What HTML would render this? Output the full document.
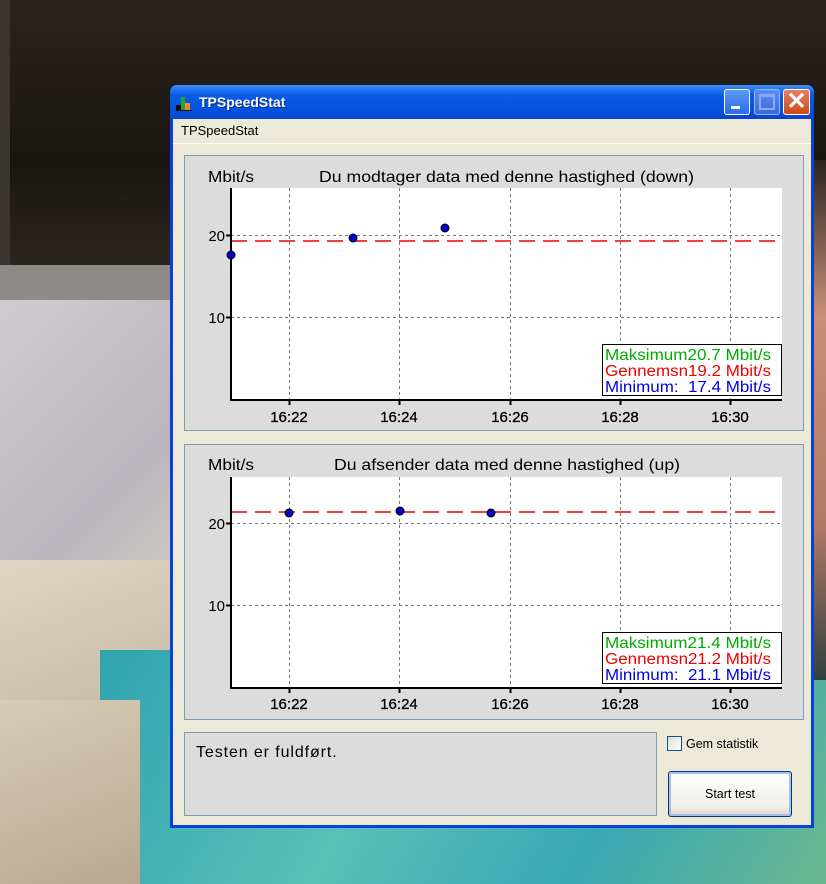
<!DOCTYPE html>
<html><head><style>
body{margin:0;width:826px;height:884px;overflow:hidden;position:relative;font-family:"Liberation Sans",sans-serif;background:#1c1814}
.a{position:absolute}
</style></head><body>
<div class="a" style="left:0;top:0;width:826px;height:270px;background:linear-gradient(#2a241e,#1a1612 60%,#2c2620)"></div>
<div class="a" style="left:0;top:0;width:10px;height:270px;background:#3a3530"></div>
<div class="a" style="left:0;top:265px;width:180px;height:60px;background:#8e8a88"></div>
<div class="a" style="left:0;top:300px;width:180px;height:330px;background:linear-gradient(135deg,#cfcdd0,#b8b6bc 60%,#d8d2c8)"></div>
<div class="a" style="left:0;top:560px;width:180px;height:324px;background:linear-gradient(160deg,#e0d6c2,#c8bca8 50%,#e6dcc8)"></div>
<div class="a" style="left:100px;top:650px;width:726px;height:234px;background:linear-gradient(120deg,#2fa4b0,#5ac0b8 40%,#3aa8b4 70%,#6ab890)"></div>
<div class="a" style="left:0;top:700px;width:140px;height:184px;background:linear-gradient(160deg,#d8ccb4,#b8a890)"></div>
<div class="a" style="left:812px;top:160px;width:14px;height:520px;background:linear-gradient(#2a2420,#c8907a 30%,#b07a66 70%,#304040)"></div>

<div class="a" style="left:170px;top:85px;width:644px;height:743px;background:#0842d8;border-radius:7px 7px 0 0"></div>
<div class="a" style="left:170px;top:85px;width:644px;height:34px;background:linear-gradient(#3c8cf8,#0a5ae8 30%,#0650dc 80%,#0644c8);border-radius:7px 7px 0 0"></div>
<svg class="a" style="left:176px;top:95px" width="18" height="16"><rect x="0" y="10" width="5" height="5" fill="#111"/><rect x="5" y="2" width="4" height="13" fill="#2a2"/><rect x="9" y="8" width="5" height="7" fill="#e83"/><rect x="0" y="15" width="16" height="1" fill="#111"/></svg>
<div class="a" style="left:199px;top:94px;color:#fff;font-weight:bold;font-size:14px;text-shadow:1px 1px #0a2a80">TPSpeedStat</div>
<div class="a" style="left:724px;top:89px;width:26px;height:26px;border:1px solid #fff;border-radius:3px;background:linear-gradient(#5a9af8,#2c6ae8);box-sizing:border-box"><div class="a" style="left:6px;top:16px;width:9px;height:3px;background:#fff"></div></div>
<div class="a" style="left:754px;top:89px;width:26px;height:26px;border:1px solid #9ab8f0;border-radius:3px;background:linear-gradient(#5a8ef0,#3a6ae0);box-sizing:border-box"><div class="a" style="left:4px;top:4px;width:16px;height:16px;border:2px solid #8aaaf0;border-top-width:3px;box-sizing:border-box"></div></div>
<div class="a" style="left:783px;top:89px;width:27px;height:26px;border:1px solid #fff;border-radius:3px;background:linear-gradient(#e88060,#d04818);box-sizing:border-box;color:#fff;font-size:24px;line-height:24px;text-align:center;font-weight:bold">✕</div>
<div class="a" style="left:173px;top:119px;width:638px;height:706px;background:#ece9d8"></div>
<div class="a" style="left:173px;top:143px;width:638px;height:1px;background:#fff"></div>
<div class="a" style="left:181px;top:123px;font-size:13px;color:#000">TPSpeedStat</div>

<div class="a" style="left:184px;top:155px;width:620px;height:276px;background:#dcdcdc;border:1px solid #7f9db9;box-sizing:border-box"></div>
<div class="a" style="left:184px;top:444px;width:620px;height:276px;background:#dcdcdc;border:1px solid #7f9db9;box-sizing:border-box"></div>
<div class="a" style="left:184px;top:732px;width:473px;height:84px;background:#dcdcdc;border:1px solid #7f9db9;box-sizing:border-box"></div>
<div class="a" style="left:196px;top:744px;font-size:16px;letter-spacing:0.9px">Testen er fuldført.</div>
<div class="a" style="left:667px;top:736px;width:15px;height:15px;border:1px solid #1c5180;background:linear-gradient(135deg,#dcdcd4,#fff);box-sizing:border-box"></div>
<div class="a" style="left:686px;top:737px;font-size:12.5px">Gem statistik</div>
<div class="a" style="left:668px;top:771px;width:124px;height:46px;border:1px solid #003c74;border-radius:3px;background:linear-gradient(#fff,#f0efe8 80%,#d8d4c8);box-sizing:border-box;box-shadow:inset 0 0 0 2px #a8c0e8;font-size:12.5px;text-align:center;line-height:44px">Start test</div>

<svg class="a" style="left:0;top:0" width="826" height="884" font-family="Liberation Sans, sans-serif">
<g>
<text x="208" y="182" font-size="16" textLength="46" lengthAdjust="spacingAndGlyphs">Mbit/s</text>
<text x="319" y="182" font-size="16" textLength="375" lengthAdjust="spacingAndGlyphs">Du modtager data med denne hastighed (down)</text>
<rect x="231" y="188" width="551" height="212" fill="#fff"/>
<g stroke="#777" stroke-dasharray="3,3" stroke-width="1">
<line x1="289.5" y1="188" x2="289.5" y2="400"/><line x1="399.5" y1="188" x2="399.5" y2="400"/><line x1="510.5" y1="188" x2="510.5" y2="400"/><line x1="620.5" y1="188" x2="620.5" y2="400"/><line x1="730.5" y1="188" x2="730.5" y2="400"/>
<line x1="231" y1="235.5" x2="781" y2="235.5"/><line x1="231" y1="317.5" x2="781" y2="317.5"/>
</g>
<line x1="231" y1="241" x2="781" y2="241" stroke="#e00" stroke-width="1.5" stroke-dasharray="16,8"/>
<line x1="231" y1="188" x2="231" y2="401" stroke="#000" stroke-width="2"/>
<line x1="230" y1="400" x2="782" y2="400" stroke="#000" stroke-width="2"/>
<g stroke="#000" stroke-width="2"><line x1="226" y1="235.5" x2="231" y2="235.5"/><line x1="226" y1="317.5" x2="231" y2="317.5"/>
<line x1="289.5" y1="400" x2="289.5" y2="405"/><line x1="399.5" y1="400" x2="399.5" y2="405"/><line x1="510.5" y1="400" x2="510.5" y2="405"/><line x1="620.5" y1="400" x2="620.5" y2="405"/><line x1="730.5" y1="400" x2="730.5" y2="405"/></g>
<g font-size="15" text-anchor="end"><text x="225" y="241">20</text><text x="225" y="323">10</text></g>
<g font-size="15" text-anchor="middle" stroke="#000" stroke-width="0.3"><text x="289" y="422">16:22</text><text x="399" y="422">16:24</text><text x="510" y="422">16:26</text><text x="620" y="422">16:28</text><text x="730" y="422">16:30</text></g>
<g fill="#0000cc" stroke="#000"><circle cx="231" cy="255" r="4"/><circle cx="353" cy="238" r="4"/><circle cx="445" cy="228" r="4"/></g>
<rect x="602.5" y="344.5" width="179" height="51" fill="#fff" stroke="#000"/>
<g font-size="16"><text x="605" y="360" fill="#00aa00" textLength="166" lengthAdjust="spacingAndGlyphs">Maksimum20.7 Mbit/s</text><text x="605" y="376" fill="#ee0000" textLength="166" lengthAdjust="spacingAndGlyphs">Gennemsn19.2 Mbit/s</text><text x="605" y="392" fill="#0000ee" textLength="166" lengthAdjust="spacingAndGlyphs">Minimum:&#160;&#160;17.4 Mbit/s</text></g>
</g>
<g transform="translate(0,289)">
<text x="208" y="181" font-size="16" textLength="46" lengthAdjust="spacingAndGlyphs">Mbit/s</text>
<text x="334" y="181" font-size="16" textLength="346" lengthAdjust="spacingAndGlyphs">Du afsender data med denne hastighed (up)</text>
<rect x="231" y="188" width="551" height="211" fill="#fff"/>
<g stroke="#777" stroke-dasharray="3,3" stroke-width="1">
<line x1="289.5" y1="188" x2="289.5" y2="399"/><line x1="399.5" y1="188" x2="399.5" y2="399"/><line x1="510.5" y1="188" x2="510.5" y2="399"/><line x1="620.5" y1="188" x2="620.5" y2="399"/><line x1="730.5" y1="188" x2="730.5" y2="399"/>
<line x1="231" y1="234.5" x2="781" y2="234.5"/><line x1="231" y1="316.5" x2="781" y2="316.5"/>
</g>
<line x1="231" y1="223" x2="781" y2="223" stroke="#e00" stroke-width="1.5" stroke-dasharray="16,8"/>
<line x1="231" y1="188" x2="231" y2="400" stroke="#000" stroke-width="2"/>
<line x1="230" y1="399" x2="782" y2="399" stroke="#000" stroke-width="2"/>
<g stroke="#000" stroke-width="2"><line x1="226" y1="234.5" x2="231" y2="234.5"/><line x1="226" y1="316.5" x2="231" y2="316.5"/>
<line x1="289.5" y1="399" x2="289.5" y2="404"/><line x1="399.5" y1="399" x2="399.5" y2="404"/><line x1="510.5" y1="399" x2="510.5" y2="404"/><line x1="620.5" y1="399" x2="620.5" y2="404"/><line x1="730.5" y1="399" x2="730.5" y2="404"/></g>
<g font-size="15" text-anchor="end"><text x="225" y="240">20</text><text x="225" y="322">10</text></g>
<g font-size="15" text-anchor="middle" stroke="#000" stroke-width="0.3"><text x="289" y="420">16:22</text><text x="399" y="420">16:24</text><text x="510" y="420">16:26</text><text x="620" y="420">16:28</text><text x="730" y="420">16:30</text></g>
<g fill="#0000cc" stroke="#000"><circle cx="289" cy="224" r="4"/><circle cx="400" cy="222" r="4"/><circle cx="491" cy="224" r="4"/></g>
<rect x="602.5" y="343.5" width="179" height="51" fill="#fff" stroke="#000"/>
<g font-size="16"><text x="605" y="359" fill="#00aa00" textLength="166" lengthAdjust="spacingAndGlyphs">Maksimum21.4 Mbit/s</text><text x="605" y="375" fill="#ee0000" textLength="166" lengthAdjust="spacingAndGlyphs">Gennemsn21.2 Mbit/s</text><text x="605" y="391" fill="#0000ee" textLength="166" lengthAdjust="spacingAndGlyphs">Minimum:&#160;&#160;21.1 Mbit/s</text></g>
</g>
</svg>
</body></html>
